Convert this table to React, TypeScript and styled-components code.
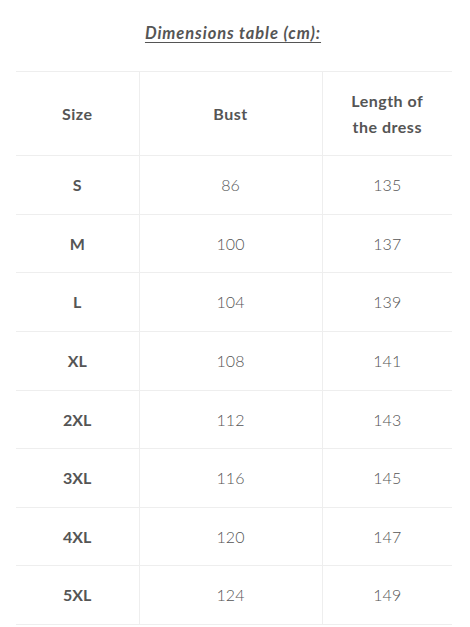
import React from "react";
import styled, { createGlobalStyle } from "styled-components";

const Global = createGlobalStyle`
  html, body { margin: 0; padding: 0; background: #fff; }
  body { font-family: "Lato", "Liberation Sans", sans-serif; color: #555; }
`;

const Page = styled.div`
  padding: 21px 18px 0 16px;
`;

const Title = styled.h3`
  margin: 0 0 26px;
  text-align: center;
  font-size: 16.5px;
  letter-spacing: 0.9px;
  line-height: 24px;
  font-style: italic;
  font-weight: 700;
  color: #555;
  text-decoration: underline;
  text-decoration-thickness: 1px;
  text-underline-offset: 3px;
  padding-right: 2px;
`;

const Table = styled.table`
  width: 436px;
  border-collapse: collapse;
  table-layout: fixed;
  border-top: 1px solid #eee;
  border-bottom: 1px solid #eee;
`;

const Col = styled.col<{ $w: number }>`
  width: ${(p) => p.$w}px;
`;

const Row = styled.tr`
  border-bottom: 1px solid #eee;
`;

const HeadCell = styled.th`
  padding: 16px 8px;
  font-size: 16px;
  letter-spacing: 0.5px;
  line-height: 25.6px;
  font-weight: 700;
  color: #555;
  text-align: center;
  & + & { border-left: 1px solid #eee; }
`;

const Cell = styled.td<{ $bold?: boolean }>`
  padding: 16px 8px;
  font-size: 16px;
  line-height: 25.6px;
  font-weight: ${(p) => (p.$bold ? 700 : 300)};
  color: #555;
  text-align: center;
  & + & { border-left: 1px solid #eee; }
`;

const rows: [string, number, number][] = [
  ["S", 86, 135],
  ["M", 100, 137],
  ["L", 104, 139],
  ["XL", 108, 141],
  ["2XL", 112, 143],
  ["3XL", 116, 145],
  ["4XL", 120, 147],
  ["5XL", 124, 149],
];

export default function App() {
  return (
    <Page>
      <Global />
      <Title>Dimensions table (cm):</Title>
      <Table>
        <colgroup>
          <Col $w={123} />
          <Col $w={183} />
          <Col $w={130} />
        </colgroup>
        <thead>
          <Row>
            <HeadCell>Size</HeadCell>
            <HeadCell>Bust</HeadCell>
            <HeadCell>
              Length of
              <br />
              the dress
            </HeadCell>
          </Row>
        </thead>
        <tbody>
          {rows.map(([s, b, l]) => (
            <Row key={s}>
              <Cell $bold>{s}</Cell>
              <Cell>{b}</Cell>
              <Cell>{l}</Cell>
            </Row>
          ))}
        </tbody>
      </Table>
    </Page>
  );
}
